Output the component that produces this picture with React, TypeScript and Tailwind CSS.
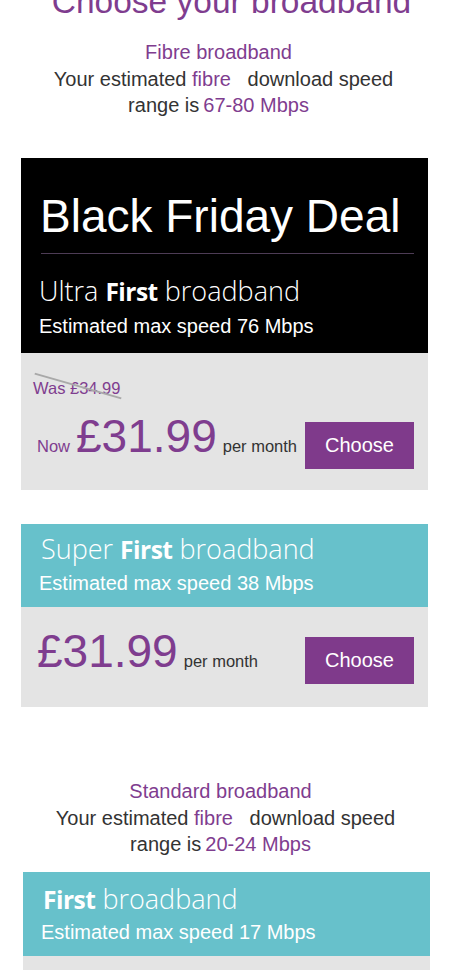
import React from 'react';

const PURPLE = 'text-[#7f3d8f]';

function PlanName({ pre, className }: { pre?: string; className?: string }) {
  return (
    <div
      className={`font-['Open_Sans',sans-serif] text-[27px] font-light leading-[29px] text-white ${className ?? ''}`}
    >
      {pre && <span>{pre} </span>}
      <span className="text-[24.5px] font-bold tracking-[-0.5px]">First</span> broadband
    </div>
  );
}

function Speed({ mbps, className }: { mbps: number; className?: string }) {
  return (
    <div className={`pl-[18px] text-[20px] leading-[24px] text-white ${className ?? ''}`}>
      Estimated max speed {mbps} Mbps
    </div>
  );
}

function PriceRow({ now }: { now?: boolean }) {
  return (
    <div className="flex items-start justify-between">
      <div className="flex items-baseline gap-[6px]">
        {now && <span className={`text-[16.5px] ${PURPLE}`}>Now</span>}
        <span className={`text-[46px] leading-none ${PURPLE}`}>£31.99</span>
        <span className="text-[16.5px] text-[#333]">per month</span>
      </div>
      <button
        type="button"
        className="mt-[9px] h-[47px] w-[109px] bg-[#7f3a8b] text-[20px] text-white"
      >
        Choose
      </button>
    </div>
  );
}

function SpeedIntro({ title, range, className }: { title: string; range: string; className: string }) {
  return (
    <div className={`text-center text-[20px] leading-[27px] text-[#333] ${className}`}>
      <div className={PURPLE}>{title}</div>
      <div className="pl-[10px]">
        Your estimated <span className={`mr-[11px] ${PURPLE}`}>fibre</span> download speed
      </div>
      <div className="leading-[25px]">
        range is<span className={`ml-[4px] ${PURPLE}`}>{range}</span>
      </div>
    </div>
  );
}

export default function App() {
  return (
    <div className="min-h-screen overflow-hidden bg-white font-['Liberation_Sans',Arial,sans-serif]">
      <h1 className={`-mt-[15px] pl-[13px] text-center text-[33.5px] leading-none ${PURPLE}`}>
        Choose your broadband
      </h1>

      <SpeedIntro title="Fibre broadband" range="67-80 Mbps" className="mt-[20px] pr-[13px]" />

      {/* Black Friday card */}
      <div className="ml-[21px] mt-[40px] w-[407px]">
        <div className="bg-black pb-[15px] pt-[35px]">
          <div className="pl-[19px] text-[46px] leading-none text-white">Black Friday Deal</div>
          <div className="ml-[20px] mr-[14px] mt-[14px] h-px bg-[#4d3c55]" />
          <PlanName pre="Ultra" className="mt-[22px] pl-[18px]" />
          <Speed mbps={76} className="mt-[8px]" />
        </div>
        <div className="bg-[#e4e4e4] pb-[21px] pl-[12px] pr-[14px] pt-[25px]">
          <div className={`relative w-fit text-[16.5px] leading-[20px] ${PURPLE}`}>
            Was £34.99
            <span className="absolute left-0 top-[7.5px] h-[2px] w-[90px] rotate-[16deg] bg-[#a9a9a9]" />
          </div>
          <div className="mt-[15px] pl-[4px]">
            <PriceRow now />
          </div>
        </div>
      </div>

      {/* Super First card */}
      <div className="ml-[21px] mt-[34px] w-[407px]">
        <div className="bg-[#67c1cb] pb-[12px] pt-[10px]">
          <PlanName pre="Super" className="pl-[20px]" />
          <Speed mbps={38} className="mt-[7px]" />
        </div>
        <div className="bg-[#e4e4e4] pb-[23px] pl-[16px] pr-[14px] pt-[21px]">
          <PriceRow />
        </div>
      </div>

      <SpeedIntro title="Standard broadband" range="20-24 Mbps" className="mt-[71px] pr-[9px]" />

      {/* First card */}
      <div className="ml-[23px] mt-[15px] w-[407px]">
        <div className="bg-[#67c1cb] pb-[12px] pt-[12px]">
          <PlanName className="pl-[20px]" />
          <Speed mbps={17} className="mt-[6px]" />
        </div>
        <div className="h-[120px] bg-[#e4e4e4]" />
      </div>
    </div>
  );
}
